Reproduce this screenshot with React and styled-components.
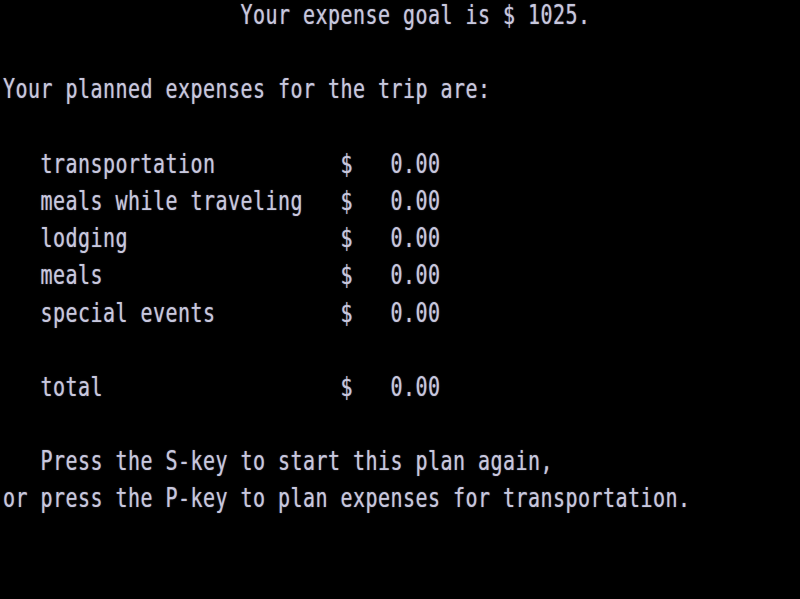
import { createGlobalStyle, styled } from "styled-components";

const GlobalStyle = createGlobalStyle`
  html, body {
    margin: 0;
    padding: 0;
    background: #000;
  }
  body {
    width: 800px;
    height: 599px;
    overflow: hidden;
  }
`;

const expenses = [
  { label: "transportation", amount: "0.00" },
  { label: "meals while traveling", amount: "0.00" },
  { label: "lodging", amount: "0.00" },
  { label: "meals", amount: "0.00" },
  { label: "special events", amount: "0.00" },
];

export default function App() {
  return (
    <Screen>
      <GlobalStyle />
      <Line $indent={19}>Your expense goal is $ 1025.</Line>
      <Blank />
      <Line>Your planned expenses for the trip are:</Line>
      <Blank />
      {expenses.map((item) => (
        <Row key={item.label}>
          <span>{item.label}</span>
          <span>$</span>
          <span>{item.amount}</span>
        </Row>
      ))}
      <Blank />
      <Row>
        <span>total</span>
        <span>$</span>
        <span>0.00</span>
      </Row>
      <Blank />
      <Line $indent={3}>Press the S-key to start this plan again,</Line>
      <Line>or press the P-key to plan expenses for transportation.</Line>
    </Screen>
  );
}

const Screen = styled.main`
  width: 800px;
  height: 599px;
  padding: 2px 0 0 3px;
  box-sizing: border-box;
  background: #000;
  color: #c8c8de;
  font-family: "DejaVu Sans Mono", "Liberation Mono", monospace;
  font-size: 20px;
  letter-spacing: 0.46px;
  text-shadow: 0 0 1px rgba(200, 200, 230, 0.6);
  overflow: hidden;
`;

const Line = styled.div`
  height: 27.2px;
  line-height: 27.2px;
  margin-bottom: 10px;
  padding-left: ${(p) => (p.$indent || 0) * 12.5}px;
  white-space: pre;
  transform: scaleY(1.37);
`;

const Blank = styled(Line)``;

const Row = styled(Line)`
  display: grid;
  grid-template-columns: 300px 50px auto;
  padding-left: 37.5px;
`;
